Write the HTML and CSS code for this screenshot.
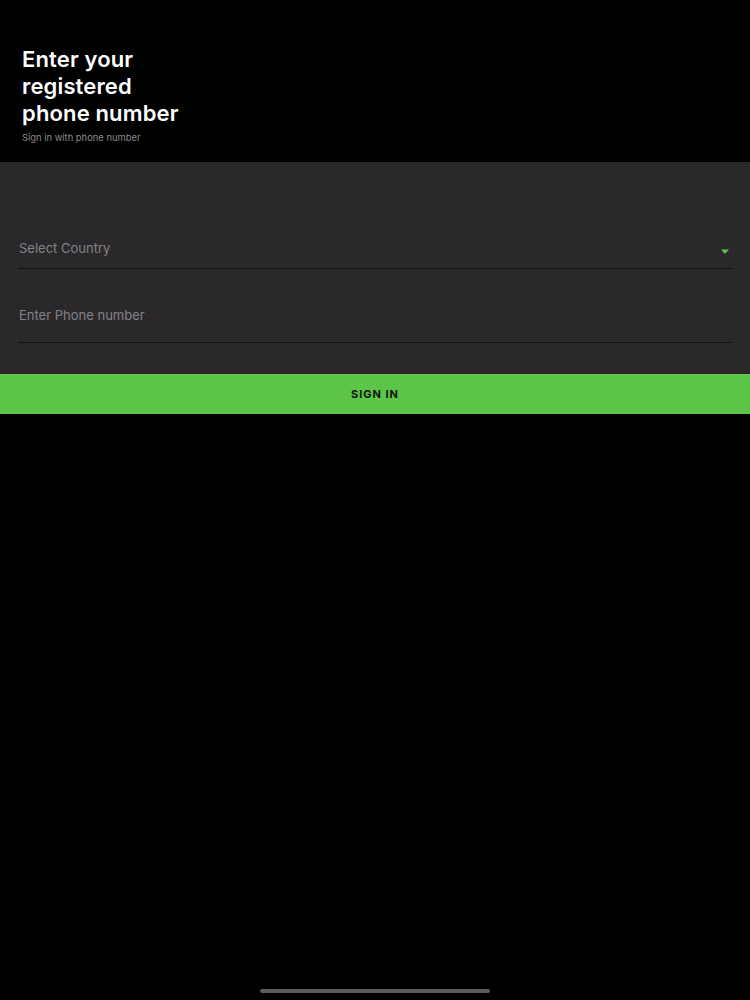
FILE: index.html
```html
<!DOCTYPE html>
<html lang="en">
<head>
<meta charset="utf-8">
<title>Sign in</title>
<link rel="stylesheet" href="styles.css">
</head>
<body>
<div class="screen">
  <header class="header">
    <h1 class="title">Enter your<br>registered<br>phone number</h1>
    <p class="subtitle">Sign in with phone number</p>
  </header>
  <section class="panel">
    <div class="field field-country">
      <span class="placeholder">Select Country</span>
      <svg class="caret" width="10" height="6" viewBox="0 0 10 6"><path d="M1 0.5 L9 0.5 L5 5 Z" fill="#5cc547"/></svg>
    </div>
    <div class="field field-phone">
      <span class="placeholder">Enter Phone number</span>
    </div>
  </section>
  <button class="signin">SIGN IN</button>
  <div class="spacer"></div>
  <div class="home-bar"></div>
</div>
</body>
</html>
```

FILE: styles.css
```css
html, body {
  margin: 0;
  padding: 0;
  background: #000;
}
body {
  font-family: Inter, "Open Sans", "Liberation Sans", sans-serif;
}
.screen {
  width: 750px;
  height: 1000px;
  display: flex;
  flex-direction: column;
  background: #000;
}
.header {
  box-sizing: border-box;
  height: 162px;
  padding: 46px 22px 0;
}
.title {
  margin: 0;
  color: #fff;
  font-size: 22px;
  line-height: 27px;
  font-weight: 600;
  letter-spacing: 0.15px;
}
.subtitle {
  margin: 5px 0 0;
  color: #8d8b8e;
  font-size: 9.4px;
  line-height: 12px;
}
.panel {
  box-sizing: border-box;
  height: 212px;
  background: #2a282b;
  padding: 77px 18px 0;
  display: flex;
  flex-direction: column;
  gap: 37px;
}
.field {
  display: flex;
  align-items: center;
  justify-content: space-between;
  border-bottom: 1px solid #111;
  padding: 0 0 11px 1px;
  height: 18px;
}
.field-phone {
  padding-bottom: 18px;
}
.placeholder {
  color: #858386;
  font-size: 13px;
  line-height: 18px;
}
.caret {
  margin: 8px 2px 0 0;
}
.signin {
  height: 40px;
  border: none;
  margin: 0;
  background: #5cc547;
  color: #121212;
  font-family: inherit;
  font-size: 11px;
  font-weight: 700;
  letter-spacing: 1px;
  width: 100%;
}
.spacer {
  flex: 1;
}
.home-bar {
  align-self: center;
  width: 230px;
  height: 4px;
  border-radius: 2px;
  background: #5d5d5d;
  margin-bottom: 7px;
}
```
